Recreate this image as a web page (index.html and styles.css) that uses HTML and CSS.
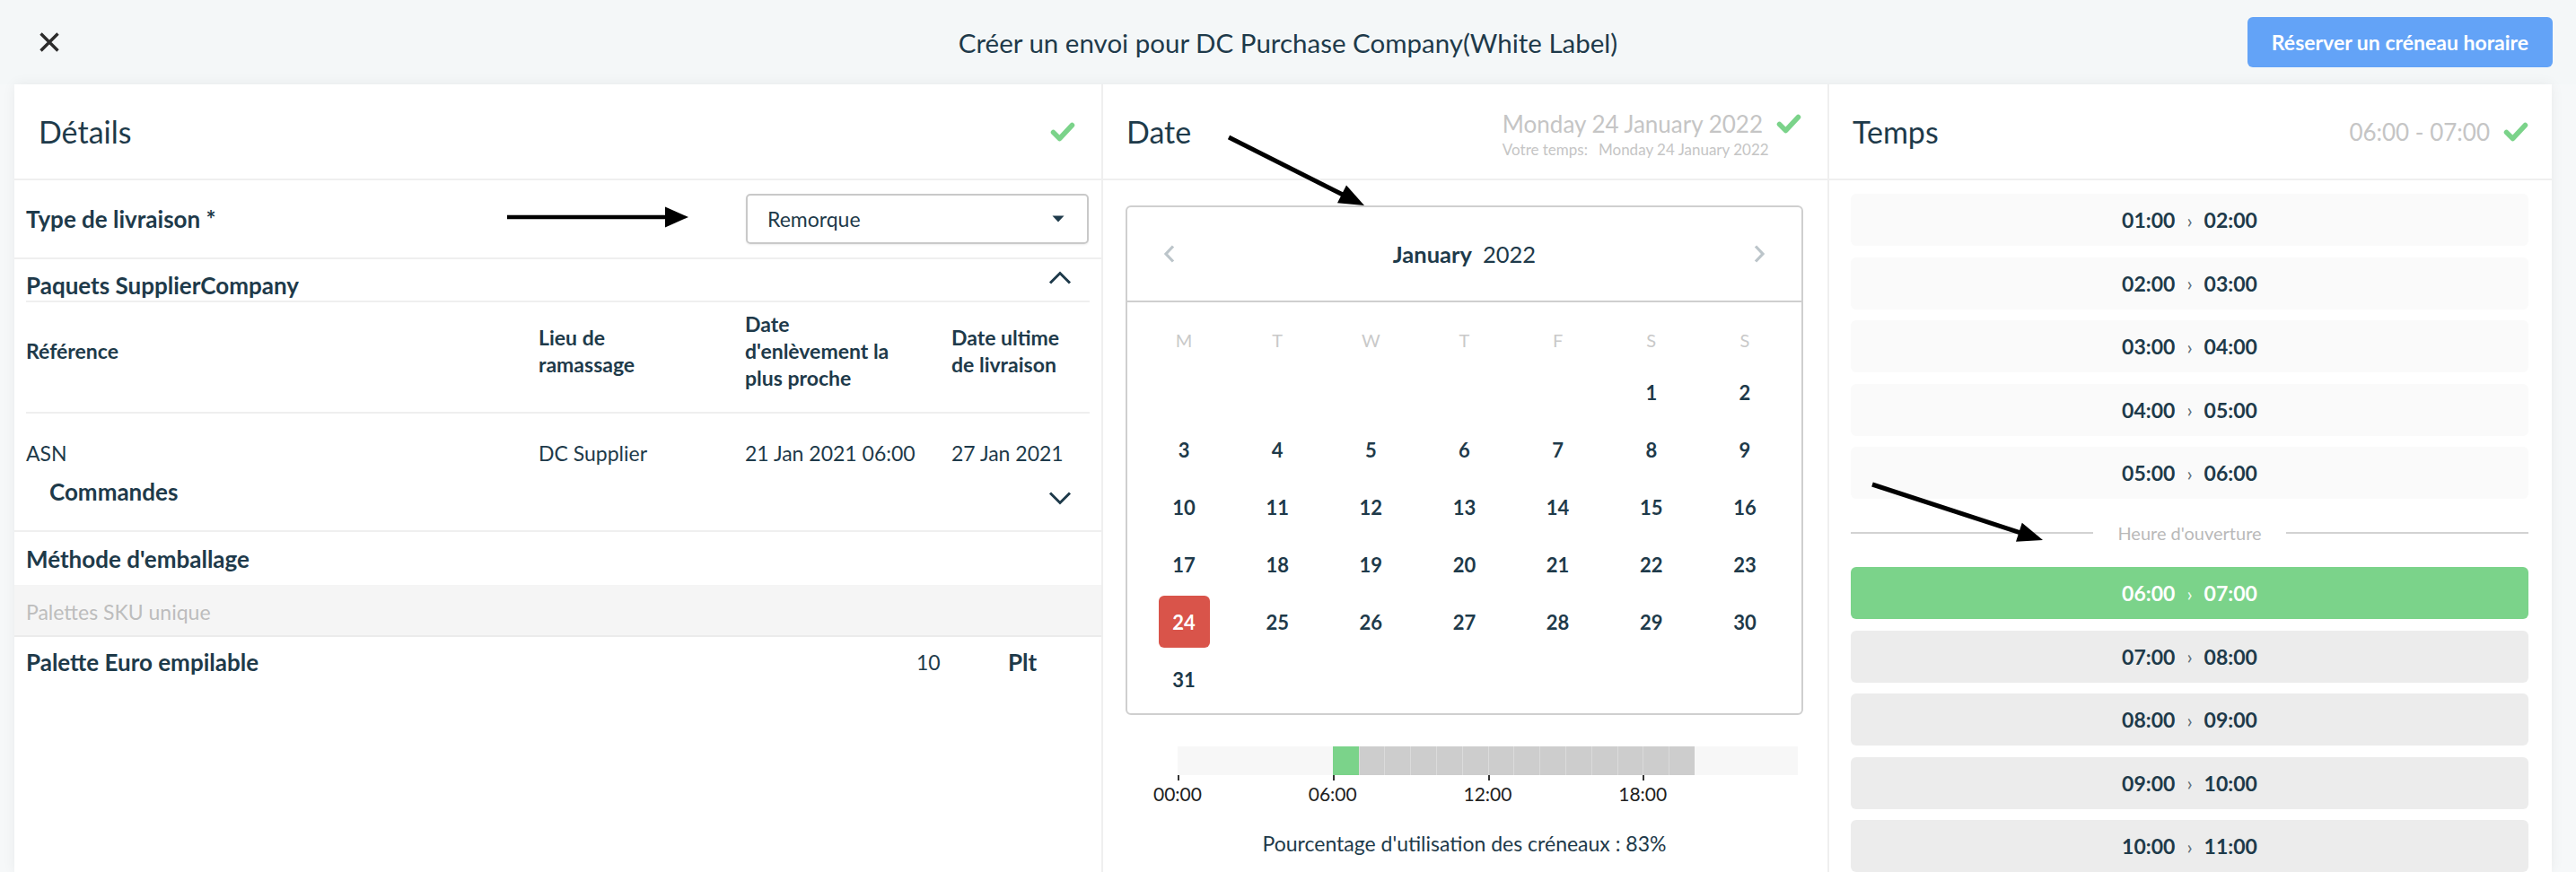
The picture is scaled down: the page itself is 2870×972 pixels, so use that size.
FILE: index.html
```html
<!DOCTYPE html>
<html lang="fr">
<head>
<meta charset="utf-8">
<title>Créer un envoi</title>
<link rel="stylesheet" href="styles.css">
</head>
<body>
<header class="topbar">
  <div class="topbar-left">
    <button class="close-btn" aria-label="Fermer">
      <svg width="24" height="22" viewBox="0 0 24 22"><path d="M2.5 1.5 L21.5 20.5 M21.5 1.5 L2.5 20.5" stroke="#2b2b2b" stroke-width="3.4" fill="none"/></svg>
    </button>
  </div>
  <h1 class="title">Créer un envoi pour DC Purchase Company(White Label)</h1>
  <div class="topbar-right">
    <button class="book-btn">Réserver un créneau horaire</button>
  </div>
</header>

<main class="panels">
  <section class="panel panel-details">
    <div class="panel-head">
      <h2>Détails</h2>
      <svg class="check" width="28" height="22" viewBox="0 0 28 22"><polyline points="3.5,11.5 10.5,18.5 24.5,3.5" fill="none" stroke="#7bd38a" stroke-width="5.5" stroke-linecap="round" stroke-linejoin="round"/></svg>
    </div>

    <div class="field-row">
      <span class="label-strong">Type de livraison *</span>
      <div class="select">
        <span>Remorque</span>
        <svg width="14" height="8" viewBox="0 0 14 8"><polygon points="0.5,0.5 13.5,0.5 7,7.5" fill="#1e3a4a"/></svg>
      </div>
    </div>

    <div class="packages">
      <div class="packages-head">
        <span class="label-strong">Paquets SupplierCompany</span>
        <svg class="chev chev-up" width="26" height="15" viewBox="0 0 26 15"><polyline points="2,13.5 13,2.5 24,13.5" fill="none" stroke="#1e3a4a" stroke-width="3"/></svg>
      </div>
      <div class="pkg-row pkg-th">
        <div>Référence</div>
        <div>Lieu de<br>ramassage</div>
        <div>Date<br>d'enlèvement la<br>plus proche</div>
        <div>Date ultime<br>de livraison</div>
      </div>
      <div class="pkg-row pkg-td">
        <div>ASN</div>
        <div>DC Supplier</div>
        <div>21 Jan 2021 06:00</div>
        <div>27 Jan 2021</div>
      </div>
      <div class="orders">
        <span class="label-strong">Commandes</span>
        <svg class="chev" width="26" height="15" viewBox="0 0 26 15"><polyline points="2,1.5 13,12.5 24,1.5" fill="none" stroke="#1e3a4a" stroke-width="3"/></svg>
      </div>
    </div>

    <div class="method-head label-strong">Méthode d'emballage</div>
    <div class="method-group">Palettes SKU unique</div>
    <div class="method-item">
      <span class="label-strong">Palette Euro empilable</span>
      <span class="qty">10</span>
      <span class="label-strong">Plt</span>
    </div>
  </section>

  <section class="panel panel-date">
    <div class="panel-head">
      <h2>Date</h2>
      <div class="date-summary">
        <div class="date-main">
          <span>Monday 24 January 2022</span>
          <svg class="check" width="28" height="22" viewBox="0 0 28 22"><polyline points="3.5,11.5 10.5,18.5 24.5,3.5" fill="none" stroke="#7bd38a" stroke-width="5.5" stroke-linecap="round" stroke-linejoin="round"/></svg>
        </div>
        <div class="date-sub">Votre temps:<span class="sub-val">Monday 24 January 2022</span></div>
      </div>
    </div>

    <div class="date-body">
      <div class="calendar">
        <div class="cal-head">
          <svg width="14" height="22" viewBox="0 0 14 22"><polyline points="11,2.5 3,11 11,19.5" fill="none" stroke="#bcc5ca" stroke-width="3.2"/></svg>
          <div class="cal-title"><span class="cal-month">January</span><span class="cal-year">2022</span></div>
          <svg width="14" height="22" viewBox="0 0 14 22"><polyline points="3,2.5 11,11 3,19.5" fill="none" stroke="#bcc5ca" stroke-width="3.2"/></svg>
        </div>
        <div class="cal-grid">
          <span class="wd">M</span><span class="wd">T</span><span class="wd">W</span><span class="wd">T</span><span class="wd">F</span><span class="wd">S</span><span class="wd">S</span>
          <span class="day"></span><span class="day"></span><span class="day"></span><span class="day"></span><span class="day"></span><span class="day">1</span><span class="day">2</span>
          <span class="day">3</span><span class="day">4</span><span class="day">5</span><span class="day">6</span><span class="day">7</span><span class="day">8</span><span class="day">9</span>
          <span class="day">10</span><span class="day">11</span><span class="day">12</span><span class="day">13</span><span class="day">14</span><span class="day">15</span><span class="day">16</span>
          <span class="day">17</span><span class="day">18</span><span class="day">19</span><span class="day">20</span><span class="day">21</span><span class="day">22</span><span class="day">23</span>
          <span class="day"><span class="day-selected">24</span></span><span class="day">25</span><span class="day">26</span><span class="day">27</span><span class="day">28</span><span class="day">29</span><span class="day">30</span>
          <span class="day">31</span><span class="day"></span><span class="day"></span><span class="day"></span><span class="day"></span><span class="day"></span><span class="day"></span>
        </div>
      </div>

      <div class="timeline">
        <div class="bar">
          <span class="seg"></span><span class="seg"></span><span class="seg"></span><span class="seg"></span><span class="seg"></span><span class="seg"></span>
          <span class="seg sel"></span>
          <span class="seg busy"></span><span class="seg busy"></span><span class="seg busy"></span><span class="seg busy"></span><span class="seg busy"></span><span class="seg busy"></span><span class="seg busy"></span><span class="seg busy"></span><span class="seg busy"></span><span class="seg busy"></span><span class="seg busy"></span><span class="seg busy"></span><span class="seg busy"></span>
          <span class="seg"></span><span class="seg"></span><span class="seg"></span><span class="seg"></span>
        </div>
        <div class="axis">
          <div class="axis-item"><div class="tick"></div><span class="axis-label">00:00</span></div>
          <div class="axis-item"><div class="tick"></div><span class="axis-label">06:00</span></div>
          <div class="axis-item"><div class="tick"></div><span class="axis-label">12:00</span></div>
          <div class="axis-item"><div class="tick"></div><span class="axis-label">18:00</span></div>
        </div>
      </div>
      <p class="usage">Pourcentage d'utilisation des créneaux : 83%</p>
    </div>
  </section>

  <section class="panel panel-time">
    <div class="panel-head">
      <h2>Temps</h2>
      <div class="time-summary">
        <span>06:00 - 07:00</span>
        <svg class="check" width="28" height="22" viewBox="0 0 28 22"><polyline points="3.5,11.5 10.5,18.5 24.5,3.5" fill="none" stroke="#7bd38a" stroke-width="5.5" stroke-linecap="round" stroke-linejoin="round"/></svg>
      </div>
    </div>
    <div class="slots">
      <div class="slot"><span>01:00</span><span class="sep">›</span><span>02:00</span></div>
      <div class="slot"><span>02:00</span><span class="sep">›</span><span>03:00</span></div>
      <div class="slot"><span>03:00</span><span class="sep">›</span><span>04:00</span></div>
      <div class="slot"><span>04:00</span><span class="sep">›</span><span>05:00</span></div>
      <div class="slot"><span>05:00</span><span class="sep">›</span><span>06:00</span></div>
      <div class="opening">Heure d'ouverture</div>
      <div class="slot selected"><span>06:00</span><span class="sep">›</span><span>07:00</span></div>
      <div class="slot open"><span>07:00</span><span class="sep">›</span><span>08:00</span></div>
      <div class="slot open"><span>08:00</span><span class="sep">›</span><span>09:00</span></div>
      <div class="slot open"><span>09:00</span><span class="sep">›</span><span>10:00</span></div>
      <div class="slot open"><span>10:00</span><span class="sep">›</span><span>11:00</span></div>
    </div>
  </section>
</main>

<svg class="annotations" width="2870" height="972" viewBox="0 0 2870 972" aria-hidden="true">
  <line x1="565" y1="242" x2="744" y2="242" stroke="#000" stroke-width="4.5"/>
  <polygon points="741,230.5 767,242 741,253.5" fill="#000"/>
  <line x1="1369" y1="153" x2="1497" y2="217.4" stroke="#000" stroke-width="5"/>
  <polygon points="1520,229 1490,226.2 1500,206.6" fill="#000"/>
  <line x1="2086" y1="540" x2="2251" y2="593.8" stroke="#000" stroke-width="5"/>
  <polygon points="2276,602 2246,603.8 2252.8,582.8" fill="#000"/>
</svg>
</body>
</html>
```

FILE: styles.css
```css
* { box-sizing: border-box; }

html, body { margin: 0; padding: 0; }

body {
  width: 2870px;
  height: 972px;
  overflow: hidden;
  position: relative;
  background: #f6f8f9;
  font-family: Lato, "Open Sans", sans-serif;
  color: #1e3a4a;
}

/* ---------- top bar ---------- */
.topbar {
  height: 94px;
  background: #f4f7f8;
  display: grid;
  grid-template-columns: 1fr auto 1fr;
  align-items: center;
}
.topbar-left { padding-left: 43px; display: flex; }
.close-btn { border: 0; background: none; padding: 0; width: 24px; height: 22px; display: flex; }
.title { margin: 0; font-weight: 400; font-size: 29.5px; color: #1e3a4a; }
.topbar-right { display: flex; justify-content: flex-end; padding-right: 26px; }
.book-btn {
  height: 56px;
  width: 340px;
  border: 0;
  border-radius: 6px;
  background: #63a3f7;
  color: #fff;
  font-family: inherit;
  font-weight: 700;
  font-size: 23px;
}

/* ---------- panels ---------- */
.panels {
  display: grid;
  grid-template-columns: 1211px 809px 807px;
  margin: 0 27px 0 16px;
  height: 878px;
  background: #fff;
  box-shadow: 0 0 14px rgba(0, 0, 0, 0.06);
  overflow: hidden;
}
.panel { min-width: 0; }
.panel + .panel { border-left: 2px solid #efefef; }

.panel-head {
  height: 107px;
  border-bottom: 2px solid #efefef;
  display: flex;
  align-items: center;
  justify-content: space-between;
  padding: 0 29px 0 26px;
}
.panel-details .panel-head { padding-left: 27px; }
.panel-time .panel-head { padding-right: 26px; }
.panel-head h2 { margin: 0; font-weight: 400; font-size: 34px; color: #1e3a4a; }
.check { display: block; }

.label-strong { font-weight: 700; font-size: 26px; }

/* details */
.field-row {
  height: 88px;
  border-bottom: 2px solid #efefef;
  display: flex;
  align-items: center;
  justify-content: space-between;
  padding: 0 14px 0 13px;
}
.select {
  width: 382px;
  height: 56px;
  border: 2px solid #c9c9c9;
  border-radius: 5px;
  box-shadow: 0 1px 2px rgba(0, 0, 0, 0.08);
  display: flex;
  align-items: center;
  justify-content: space-between;
  padding: 0 25px 0 22px;
  font-size: 23px;
}

.packages { padding: 0 13px; border-bottom: 2px solid #efefef; }
.packages-head {
  height: 48px;
  border-bottom: 2px solid #efefef;
  display: flex;
  justify-content: space-between;
  align-items: flex-end;
}
.packages-head .label-strong { line-height: 32px; padding-bottom: 1px; }
.chev { display: block; margin-right: 20px; }
.chev-up { align-self: flex-start; margin-top: 13px; }

.pkg-row {
  display: grid;
  grid-template-columns: 571px 230px 230px 1fr;
  align-items: center;
  font-size: 23px;
  line-height: 30px;
}
.pkg-th { font-weight: 700; padding: 9px 0 23px; border-bottom: 2px solid #efefef; }
.pkg-td { padding-top: 29px; }

.orders {
  display: flex;
  justify-content: space-between;
  align-items: flex-start;
  padding: 12px 0 27px 26px;
}
.orders .label-strong { line-height: 32px; }
.orders .chev { margin-top: 16px; }

.method-head { height: 59px; display: flex; align-items: center; padding-left: 13px; }
.method-group {
  height: 58px;
  background: #f5f5f5;
  border-bottom: 2px solid #ebebeb;
  display: flex;
  align-items: center;
  padding: 3px 0 0 13px;
  color: #bdbdbd;
  font-size: 23px;
}
.method-item {
  height: 56px;
  display: grid;
  grid-template-columns: 992px 102px 1fr;
  align-items: center;
  padding: 0 13px;
}
.qty { font-size: 23px; }

/* date */
.date-summary { display: flex; flex-direction: column; margin-top: 8px; }
.date-main {
  display: flex;
  align-items: center;
  gap: 15px;
  font-size: 26px;
  line-height: 30px;
  color: #c5c5c5;
}
.date-sub { font-size: 17px; line-height: 22px; color: #c5c5c5; margin-top: 3px; }
.sub-val { margin-left: 12px; }

.date-body { padding: 28px 27px 0 25px; }

.calendar { border: 2px solid #cfcfcf; border-radius: 6px; }
.cal-head {
  height: 106px;
  border-bottom: 2px solid #cfcfcf;
  display: flex;
  align-items: center;
  justify-content: space-between;
  padding: 0 40px;
}
.cal-head svg { display: block; }
.cal-title { font-size: 25.5px; }
.cal-month { font-weight: 700; }
.cal-year { margin-left: 12px; }

.cal-grid {
  display: grid;
  grid-template-columns: repeat(7, 1fr);
  grid-template-rows: 52px repeat(6, 64px);
  padding: 16px 11px 6px;
}
.wd, .day { display: flex; align-items: center; justify-content: center; }
.wd { font-size: 20px; color: #c9c9c9; }
.day { font-size: 22px; font-weight: 700; color: #1e3a4a; }
.day-selected {
  width: 57px;
  height: 58px;
  border-radius: 6px;
  background: #d9544a;
  color: #fff;
  display: flex;
  align-items: center;
  justify-content: center;
}

.timeline { margin-top: 35px; padding: 0 6px 0 58px; }
.bar { display: flex; height: 32px; background: #f7f7f7; }
.seg { flex: 1; }
.seg.sel { background: #7bd38a; }
.seg.busy { background: #cdcdcd; box-shadow: inset 1px 0 0 #dbdbdb; }
.axis { display: flex; }
.axis-item { width: 25%; }
.tick { width: 2px; height: 6px; background: #333; }
.axis-label {
  display: inline-block;
  transform: translateX(-50%);
  margin-top: 2px;
  font-size: 21px;
  line-height: 26px;
  color: #222;
}
.usage { margin: 27px 0 0; text-align: center; font-size: 23px; line-height: 30px; color: #1e3a4a; }

/* time */
.time-summary { display: flex; align-items: center; gap: 15px; font-size: 26px; color: #c5c5c5; }

.slots {
  padding: 15px 26px 0 24px;
  display: flex;
  flex-direction: column;
  gap: 12.5px;
}
.slot {
  flex: none;
  height: 58px;
  border-radius: 6px;
  background: #fafafa;
  display: flex;
  align-items: center;
  justify-content: center;
  gap: 13px;
  font-weight: 700;
  font-size: 23px;
  color: #1e3a4a;
}
.slot .sep { font-weight: 400; font-size: 22px; color: #5f6f78; }
.slot.open { background: #ececec; }
.slot.selected { background: #7bd38a; color: #fff; }
.slot.selected .sep { color: #eefaf1; }

.opening {
  flex: none;
  height: 51px;
  display: flex;
  align-items: center;
  gap: 27px;
  font-size: 20px;
  color: #b9b9b9;
}
.opening::before, .opening::after { content: ""; flex: 1; height: 2px; background: #d2d2d2; }

/* annotation arrows drawn over the screenshot */
.annotations { position: absolute; top: 0; left: 0; pointer-events: none; }
```
